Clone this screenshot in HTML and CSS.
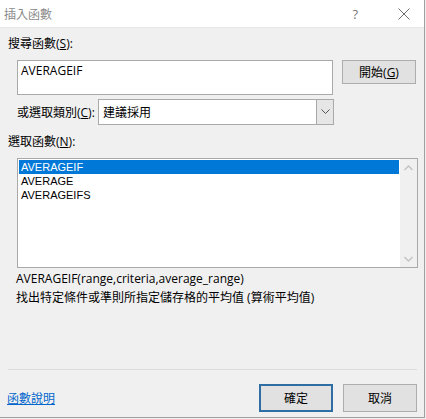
FILE: index.html
```html
<!DOCTYPE html>
<html lang="zh-Hant">
<head>
<meta charset="utf-8">
<link rel="stylesheet" href="styles.css">
</head>
<body>
<div class="dialog">
  <div class="titlebar">
    <span class="title">插入函數</span>
    <span class="help">?</span>
    <span class="close">
      <svg width="12" height="12" viewBox="0 0 12 12"><path d="M0.5 0.5 L11.5 11.5 M11.5 0.5 L0.5 11.5" stroke="#6d6d6d" stroke-width="1" fill="none"/></svg>
    </span>
  </div>
  <div class="body">
    <div class="label">搜尋函數(<u>S</u>):</div>
    <div class="search-row">
      <div class="search-box">AVERAGEIF</div>
      <div class="btn">開始(<u>G</u>)</div>
    </div>
    <div class="cat-row">
      <span class="cat-label">或選取類別(<u>C</u>):</span>
      <div class="select">
        <span class="select-text">建議採用</span>
        <span class="select-arrow">
          <svg width="9" height="6" viewBox="0 0 9 6"><path d="M0.5 0.5 L4.5 4.5 L8.5 0.5" stroke="#555" fill="none"/></svg>
        </span>
      </div>
    </div>
    <div class="label label2">選取函數(<u>N</u>):</div>
    <div class="listbox">
      <div class="items">
        <div class="item sel">AVERAGEIF</div>
        <div class="item">AVERAGE</div>
        <div class="item">AVERAGEIFS</div>
      </div>
      <div class="scroll">
        <svg width="9" height="6" viewBox="0 0 9 6"><path d="M0.5 5 L4.5 1 L8.5 5" stroke="#c2c2c2" stroke-width="1.3" fill="none"/></svg>
        <svg width="9" height="6" viewBox="0 0 9 6"><path d="M0.5 1 L4.5 5 L8.5 1" stroke="#c2c2c2" stroke-width="1.3" fill="none"/></svg>
      </div>
    </div>
    <div class="syntax">AVERAGEIF(range,criteria,average_range)</div>
    <div class="desc">找出特定條件或準則所指定儲存格的平均值 (算術平均值)</div>
    <div class="sep"></div>
    <div class="footer">
      <a class="link">函數說明</a>
      <div class="buttons">
        <div class="btn btn-lg default">確定</div>
        <div class="btn btn-lg">取消</div>
      </div>
    </div>
  </div>
</div>
</body>
</html>
```
FILE: styles.css
```css
html, body {
  margin: 0;
  padding: 0;
  background: #f0f0f0;
}
body {
  width: 426px;
  height: 419px;
  overflow: hidden;
  font-family: "Open Sans", "Noto Sans CJK TC", sans-serif;
  font-size: 12px;
  color: #000;
}
.dialog {
  width: 424px;
  height: 417px;
  border-right: 1px solid #a0a0a0;
  border-bottom: 1px solid #a0a0a0;
  background: #f0f0f0;
  display: flex;
  flex-direction: column;
}
.titlebar {
  height: 28px;
  background: #fff;
  display: flex;
  align-items: center;
  border-bottom: 1px solid #e6e6e6;
  box-sizing: border-box;
}
.title {
  margin-left: 4px;
  color: #8a8a8a;
  font-size: 12px;
  flex: 1;
}
.help {
  color: #777;
  font-size: 13px;
  margin-right: 40px;
}
.close {
  display: flex;
  margin-right: 14px;
}
.body {
  padding: 8px 7px 0 8px;
  display: flex;
  flex-direction: column;
  flex: 1;
}
.label {
  line-height: 16px;
  height: 16px;
}
.search-row {
  display: flex;
  margin-top: 8px;
  margin-left: 9px;
  gap: 9px;
}
.search-box {
  width: 316px;
  height: 35px;
  box-sizing: border-box;
  border: 1px solid #a9a9a9;
  background: #fff;
  padding: 2px 3px;
  line-height: 16px;
}
.btn {
  width: 74px;
  height: 24px;
  box-sizing: border-box;
  border: 1px solid #adadad;
  background: #e1e1e1;
  display: flex;
  align-items: center;
  justify-content: center;
}
.cat-row {
  display: flex;
  align-items: center;
  margin-top: 4px;
  margin-left: 9px;
}
.cat-label {
  width: 81px;
}
.select {
  width: 236px;
  height: 26px;
  box-sizing: border-box;
  border: 1px solid #a9a9a9;
  background: #fff;
  display: flex;
  align-items: center;
}
.select-text {
  flex: 1;
  padding-left: 4px;
}
.select-arrow {
  width: 17px;
  height: 24px;
  box-sizing: border-box;
  border-left: 1px solid #a9a9a9;
  background: #e6e6e6;
  display: flex;
  align-items: center;
  justify-content: center;
}
.label2 {
  margin-top: 9px;
}
.listbox {
  margin-top: 8px;
  margin-left: 9px;
  width: 401px;
  height: 110px;
  box-sizing: border-box;
  border: 1px solid #a9a9a9;
  background: #fff;
  display: flex;
}
.items {
  flex: 1;
  padding: 1px 1px 0 1px;
}
.item {
  height: 14px;
  line-height: 14px;
  padding-left: 2px;
  font-family: "Liberation Sans", Arial, sans-serif;
  font-size: 11px;
}
.item.sel {
  background: #0078d7;
  color: #fff;
}
.scroll {
  width: 17px;
  background: #f0f0f0;
  display: flex;
  flex-direction: column;
  justify-content: space-between;
  align-items: center;
  padding: 6px 0 5px;
  box-sizing: border-box;
}
.syntax {
  margin-top: 3px;
  margin-left: 8px;
  line-height: 16px;
}
.desc {
  margin-top: 3px;
  margin-left: 8px;
  line-height: 16px;
}
.sep {
  margin-top: 63px;
  height: 1px;
  background: #dcdcdc;
  margin-left: 0;
  width: 409px;
}
.footer {
  display: flex;
  align-items: center;
  margin-top: 14px;
}
.link {
  color: #0066cc;
  text-decoration: underline;
  flex: 1;
  margin-left: -1px;
}
.buttons {
  display: flex;
  gap: 10px;
}
.btn-lg {
  height: 28px;
}
.default {
  border: 2px solid #2f6ea5;
  background: #e1e1e1;
}
```
